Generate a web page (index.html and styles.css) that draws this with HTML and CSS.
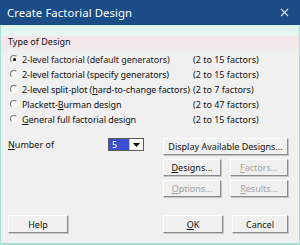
FILE: index.html
```html
<!DOCTYPE html>
<html lang="en">
<head>
    <meta charset="UTF-8">
    <meta name="viewport" content="width=device-width, initial-scale=1.0">
    <link rel="stylesheet" href="styles.css">
    <title>Create Factorial Design</title>
</head>
<body>
    <div class="window">
        <div class="titlebar">
            <span class="title">Create Factorial Design</span>
            <svg class="close" width="9" height="9" viewBox="0 0 9 9">
                <path d="M1 1 L8 8 M8 1 L1 8" stroke="#cfe3f5" stroke-width="1.1" fill="none"/>
            </svg>
        </div>

        <div class="content">
            <div class="group-label">Type of Design</div>

            <div class="designs">
                <label class="design">
                    <span class="radio checked"></span>
                    <span class="name">2-level factorial (default generators)</span>
                    <span class="range">(2 to 15 factors)</span>
                </label>
                <label class="design">
                    <span class="radio"></span>
                    <span class="name">2-level factorial (specify generators)</span>
                    <span class="range">(2 to 15 factors)</span>
                </label>
                <label class="design">
                    <span class="radio"></span>
                    <span class="name">2-level split-plot (<u>h</u>ard-to-change factors)</span>
                    <span class="range">(2 to 7 factors)</span>
                </label>
                <label class="design">
                    <span class="radio"></span>
                    <span class="name">Plackett-<u>B</u>urman design</span>
                    <span class="range">(2 to 47 factors)</span>
                </label>
                <label class="design">
                    <span class="radio"></span>
                    <span class="name"><u>G</u>eneral full factorial design</span>
                    <span class="range">(2 to 15 factors)</span>
                </label>
            </div>

            <div class="middle">
                <div class="number-row">
                    <span class="number-label"><u>N</u>umber of</span>
                    <div class="combo">
                        <span class="combo-value">5</span>
                        <span class="combo-arrow">
                            <svg width="7" height="4" viewBox="0 0 7 4"><path d="M0 0 L7 0 L3.5 4 Z" fill="#000"/></svg>
                        </span>
                    </div>
                </div>
                <div class="actions">
                    <button class="btn wide">Display Available Designs...</button>
                    <button class="btn"><u>D</u>esigns...</button>
                    <button class="btn disabled"><u>F</u>actors...</button>
                    <button class="btn disabled"><u>O</u>ptions...</button>
                    <button class="btn disabled"><u>R</u>esults...</button>
                </div>
            </div>

            <div class="footer">
                <button class="btn">Help</button>
                <div class="footer-right">
                    <button class="btn"><u>O</u>K</button>
                    <button class="btn">Cancel</button>
                </div>
            </div>
        </div>
    </div>
</body>
</html>
```

FILE: styles.css
```css
*{
    box-sizing: border-box;
}
html, body{
    margin: 0;
    width: 300px;
    height: 245px;
    overflow: hidden;
}
body{
    font-family: "Noto Sans", "Open Sans", sans-serif;
    font-size: 9px;
    color: #111;
    background: #f0f0f0;
}
.window{
    width: 300px;
    height: 245px;
    display: flex;
    flex-direction: column;
}
.titlebar{
    height: 25px;
    flex: none;
    background-color: #1c4c85;
    display: flex;
    align-items: center;
    justify-content: space-between;
    padding: 0 11px 0 7px;
    color: #fff;
}
.title{
    font-size: 11.3px;
    letter-spacing: 0.1px;
}
.content{
    flex: 1;
    display: flex;
    flex-direction: column;
    border: 1px solid #a9ded6;
    border-top: none;
    border-bottom-width: 2px;
    background: linear-gradient(to bottom, #dcf6ef 0, #e8f5f0 10px, #f4e4ea 12px, #f2e8ec 22px, #f0f0f0 26px);
    padding: 0 11px 0 7px;
}
.group-label{
    margin-top: 11px;
    height: 12px;
    line-height: 12px;
}
.designs{
    margin-top: 3.5px;
    display: flex;
    flex-direction: column;
}
.design{
    height: 15px;
    display: grid;
    grid-template-columns: 14px 171px auto;
    align-items: center;
    white-space: nowrap;
}
.name{
    letter-spacing: -0.08px;
}
.design:first-child .name{
    color: #2a1a20;
}
.radio{
    width: 8px;
    height: 8px;
    margin-left: 2px;
    border-radius: 50%;
    border: 1px solid;
    border-color: #7a7a7a #f8f8f8 #f8f8f8 #7a7a7a;
    background: #fafafa;
    position: relative;
}
.radio.checked::after{
    content: "";
    position: absolute;
    left: 1.5px;
    top: 1.5px;
    width: 3px;
    height: 3px;
    border-radius: 50%;
    background: #000;
}
.middle{
    margin-top: 11.5px;
    display: flex;
    justify-content: space-between;
}
.number-row{
    display: flex;
    align-items: center;
    height: 13px;
}
.number-label{
    width: 100px;
}
.combo{
    display: flex;
    height: 13px;
    border: 1px solid #5a5a5a;
    background: #fff;
}
.combo-value{
    width: 20px;
    background: #3a4fd2;
    color: #fff;
    padding-left: 3px;
    line-height: 11px;
}
.combo-arrow{
    width: 14px;
    display: flex;
    align-items: center;
    justify-content: center;
    border-left: 1px solid #c8c8c8;
    background: #fbfbfb;
}
.actions{
    width: 125px;
    display: grid;
    grid-template-columns: 1fr 1fr;
    column-gap: 9px;
    row-gap: 4px;
}
.btn{
    font: inherit;
    color: #111;
    height: 17px;
    padding: 0;
    margin: 0;
    background: #f0f0f0;
    border: 1px solid;
    border-color: #fdfdfd #8c8c8c #8c8c8c #fdfdfd;
    box-shadow: 1px 1px 0 #c4c4c4;
    white-space: nowrap;
}
.btn.wide{
    grid-column: 1 / 3;
}
.btn.disabled{
    color: #a3a3a3;
}
.footer{
    margin-top: auto;
    margin-bottom: 10px;
    display: flex;
    justify-content: space-between;
}
.footer .btn{
    width: 60px;
    height: 18px;
}
.footer-right{
    display: flex;
    gap: 9px;
}
.footer-right .btn:last-child{
    width: 56px;
}
```
